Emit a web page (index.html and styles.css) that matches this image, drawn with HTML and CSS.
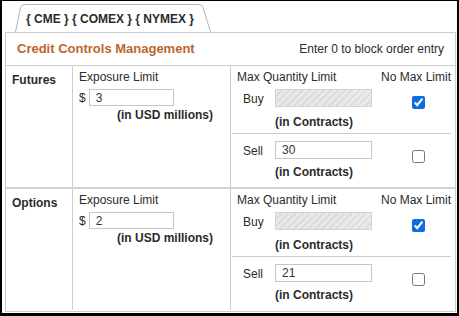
FILE: index.html
```html
<!DOCTYPE html>
<html>
<head>
	<title>Credit Controls Management</title>
	<meta charset="UTF-8">
	<link rel="stylesheet" href="styles.css">
</head>
<body>

<div class="frame">
	<div class="tabs">
		<div class="tab">
			<svg class="tab-shape" viewBox="0 0 196 28" width="196" height="28">
				<path d="M0.5 28 L5.5 3.5 Q6.2 0.5 9.5 0.5 L184 0.5 Q187.2 0.5 188 3.5 L195.5 28" fill="#fff" stroke="#b4b4b4"/>
			</svg>
			<span>{ CME } { COMEX } { NYMEX }</span>
		</div>
	</div>

	<div class="panel">
		<div class="panel-head">
			<h2>Credit Controls Management</h2>
			<span>Enter 0 to block order entry</span>
		</div>

		<div class="market">
			<div class="m-name">Futures</div>
			<div class="exposure">
				<div>Exposure Limit</div>
				<div class="amount">$ <input type="text" value="3"></div>
				<div class="caption exp-cap">(in USD millions)</div>
			</div>
			<div class="qty">
				<div class="qhead"><span>Max Quantity Limit</span><span>No Max Limit</span></div>
				<div class="side buy">
					<span class="side-label">Buy</span>
					<input type="text" class="off" disabled>
					<input type="checkbox" checked>
					<span class="caption">(in Contracts)</span>
				</div>
				<div class="side sell">
					<span class="side-label">Sell</span>
					<input type="text" value="30">
					<input type="checkbox">
					<span class="caption">(in Contracts)</span>
				</div>
			</div>
		</div>

		<div class="market last">
			<div class="m-name">Options</div>
			<div class="exposure">
				<div>Exposure Limit</div>
				<div class="amount">$ <input type="text" value="2"></div>
				<div class="caption exp-cap">(in USD millions)</div>
			</div>
			<div class="qty">
				<div class="qhead"><span>Max Quantity Limit</span><span>No Max Limit</span></div>
				<div class="side buy">
					<span class="side-label">Buy</span>
					<input type="text" class="off" disabled>
					<input type="checkbox" checked>
					<span class="caption">(in Contracts)</span>
				</div>
				<div class="side sell">
					<span class="side-label">Sell</span>
					<input type="text" value="21">
					<input type="checkbox">
					<span class="caption">(in Contracts)</span>
				</div>
			</div>
		</div>
	</div>
</div>

</body>
</html>
```

FILE: styles.css
```css
html, body
{
	margin: 0;
	background: #000;
}
body
{
	font-family: "Liberation Sans", Arial, sans-serif;
	font-size: 12px;
	line-height: 14px;
	color: #2b2b2b;
}
.frame
{
	box-sizing: border-box;
	width: 459px;
	height: 316px;
	border-style: solid;
	border-color: #000;
	border-width: 1px 2px 3px 2px;
	background: #fff;
}

/* tab strip */
.tabs
{
	height: 28px;
	padding: 3px 0 0 13px;
}
.tab
{
	position: relative;
	width: 196px;
	height: 28px;
	display: flex;
	align-items: center;
	padding-left: 11px;
	box-sizing: border-box;
	font-weight: bold;
}
.tab-shape
{
	position: absolute;
	left: 0;
	top: 0;
	z-index: 0;
}
.tab span
{
	position: relative;
	padding-top: 1px;
}

/* panel */
.panel
{
	box-sizing: border-box;
	width: 451px;
	height: 280px;
	margin-left: 3px;
	border: 1px solid #cdcdcd;
}
.panel-head
{
	height: 32px;
	display: flex;
	align-items: center;
	justify-content: space-between;
	padding: 0 11px;
	border-bottom: 1px solid #cdcdcd;
}
.panel-head h2
{
	margin: 0;
	font-size: 13px;
	color: #bd652d;
}

.market
{
	display: grid;
	grid-template-columns: 66px 158px 1fr;
	height: 121px;
	border-bottom: 2px solid #d2d2d2;
}
.market.last
{
	border-bottom: none;
}
.m-name
{
	padding: 7px 0 0 6px;
	font-weight: bold;
}
.exposure
{
	border-left: 1px solid #cdcdcd;
	padding: 4px 0 0 6px;
}
.qty
{
	border-left: 1px solid #cdcdcd;
}
.caption
{
	font-weight: bold;
	white-space: nowrap;
}

input[type=text]
{
	box-sizing: border-box;
	height: 18px;
	margin: 0;
	padding: 0 6px;
	border: 1px solid #c6c6c6;
	font-family: inherit;
	font-size: 12px;
	color: #333;
	background: #fff;
}
input.off
{
	background: repeating-linear-gradient(135deg, #e9e9e9 0, #e9e9e9 3px, #dcdcdc 3px, #dcdcdc 5px);
	border-color: #d2d2d2;
}
input[type=checkbox]
{
	width: 13px;
	height: 13px;
	margin: 0;
	accent-color: #0b6fe0;
}

.amount
{
	display: flex;
	align-items: center;
	margin-top: 5px;
}
.amount input
{
	width: 85px;
	height: 17px;
	margin-left: 3px;
}
.exp-cap
{
	margin-top: 2px;
	padding-left: 38px;
}

.qhead
{
	display: flex;
	justify-content: space-between;
	padding: 4px 4px 0 6px;
}
.side
{
	display: grid;
	grid-template-columns: 32px 97px auto;
	grid-template-rows: 18px auto;
	align-items: start;
	margin: 0 4px 0 1px;
	padding: 7px 0 7px 11px;
}
.side.buy
{
	margin-top: 5px;
	padding: 0 0 4px 11px;
	border-bottom: 1px solid #cdcdcd;
}
.side-label
{
	line-height: 18px;
	padding-top: 1px;
	height: 17px;
}
.side input[type=checkbox]
{
	grid-column: 3;
	grid-row: 1 / 3;
	margin: 7px 0 0 40px;
}
.side.sell input[type=checkbox]
{
	margin-top: 9px;
}
.side .caption
{
	grid-column: 2;
	grid-row: 2;
	margin-top: 6px;
}
.side.buy .caption
{
	margin-top: 8px;
}
```
